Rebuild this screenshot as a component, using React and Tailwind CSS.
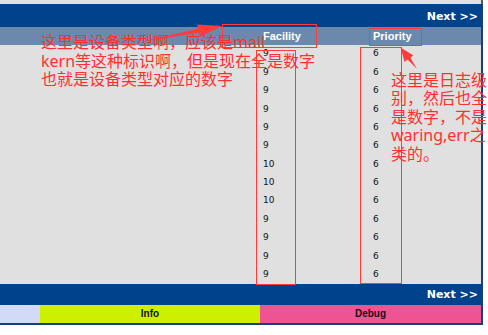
import React from 'react';

const facility = ['9', '9', '9', '9', '9', '9', '10', '10', '10', '9', '9', '9', '9'];
const priority = ['6', '6', '6', '6', '6', '6', '6', '6', '6', '6', '6', '6', '6'];

const NextBar = ({ h }) => (
  <div className={`flex ${h} items-center justify-end bg-[#00428b] pr-[3px]`}>
    <span className="font-['DejaVu_Sans',sans-serif] text-[11px] font-bold leading-none text-white">
      Next &gt;&gt;
    </span>
  </div>
);

const App = () => {
  return (
    <div className="relative h-[335px] w-[488px] overflow-hidden bg-white">
      {/* log table */}
      <div className="h-[4px] w-[483px] border-r-2 border-[#5a5a5a] bg-[#e0e0e0]" />
      <div className="w-[483px] border-r-2 border-b-2 border-[#163f7c]">
        <NextBar h="h-[23px] pt-[2px]" />

        {/* header */}
        <div className="grid h-[18px] grid-cols-[261px_110px_1fr] items-center bg-[#6b89ad] font-['Liberation_Sans',sans-serif] text-[11px] font-bold text-white">
          <div />
          <div className="pl-[2px]">Facility</div>
          <div className="pl-[2px]">Priority</div>
        </div>

        {/* rows */}
        <div className="bg-[#e0e0e0] font-['DejaVu_Sans',sans-serif] text-[9px] text-[#111]">
          {facility.map((f, i) => (
            <div key={i} className="grid h-[18.38px] grid-cols-[261px_110px_1fr] items-center">
              <div />
              <div className="pl-[2px]">{f}</div>
              <div className="pl-[2px]">{priority[i]}</div>
            </div>
          ))}
        </div>

        <NextBar h="h-[21px]" />

        {/* legend */}
        <div className="flex h-[18px] font-['Liberation_Sans',sans-serif] text-[10px] font-bold text-[#111]">
          <div className="w-[40px] bg-[#d3daf8]" />
          <div className="flex w-[220px] items-center justify-center bg-[#ccf000]">Info</div>
          <div className="flex flex-1 items-center justify-center bg-[#ee5494]">Debug</div>
        </div>
      </div>

      {/* annotations drawn over the screenshot */}
      <div className="pointer-events-none absolute inset-0">
        <div className="absolute left-[222px] top-[24px] h-[24px] w-[95px] border-[1.5px] border-[#ff3b3b]" />
        <div className="absolute left-[369px] top-[28px] h-[18px] w-[53px] border-[1.5px] border-[#ff3b3b]" />
        <div className="absolute left-[256px] top-[50px] h-[235px] w-[40px] border-[1.5px] border-[#ff3b3b]" />
        <div className="absolute left-[360px] top-[47px] h-[237px] w-[42px] border-[1.5px] border-[#ff3b3b]" />

        <svg className="absolute inset-0" width="488" height="335" viewBox="0 0 488 335">
          <polygon
            points="140,42 199,32.8 200,36.8 222,26 197.2,24.4 198.1,28.8"
            fill="#ff3b3b"
          />
          <polygon
            points="417,69 410.4,57.8 413.2,55.2 400.5,47.5 404.6,61.9 407.6,59.4"
            fill="#ff3b3b"
          />
        </svg>

        <div className="absolute left-[41px] top-[33px] whitespace-nowrap font-['Noto_Sans','Noto_Sans_CJK_SC',sans-serif] text-[16px] leading-[18.5px] text-[#ff3030]">
          <div>这里是设备类型啊，应该是mail</div>
          <div>kern等这种标识啊，但是现在全是数字</div>
          <div>也就是设备类型对应的数字</div>
        </div>

        <div className="absolute left-[391px] top-[71px] whitespace-nowrap font-['Noto_Sans','Noto_Sans_CJK_SC',sans-serif] text-[16px] leading-[18.4px] text-[#ff3030]">
          <div>这里是日志级</div>
          <div>别，然后也全</div>
          <div>是数字，不是</div>
          <div>waring,err之</div>
          <div>类的。</div>
        </div>
      </div>
    </div>
  );
};

export default App;
